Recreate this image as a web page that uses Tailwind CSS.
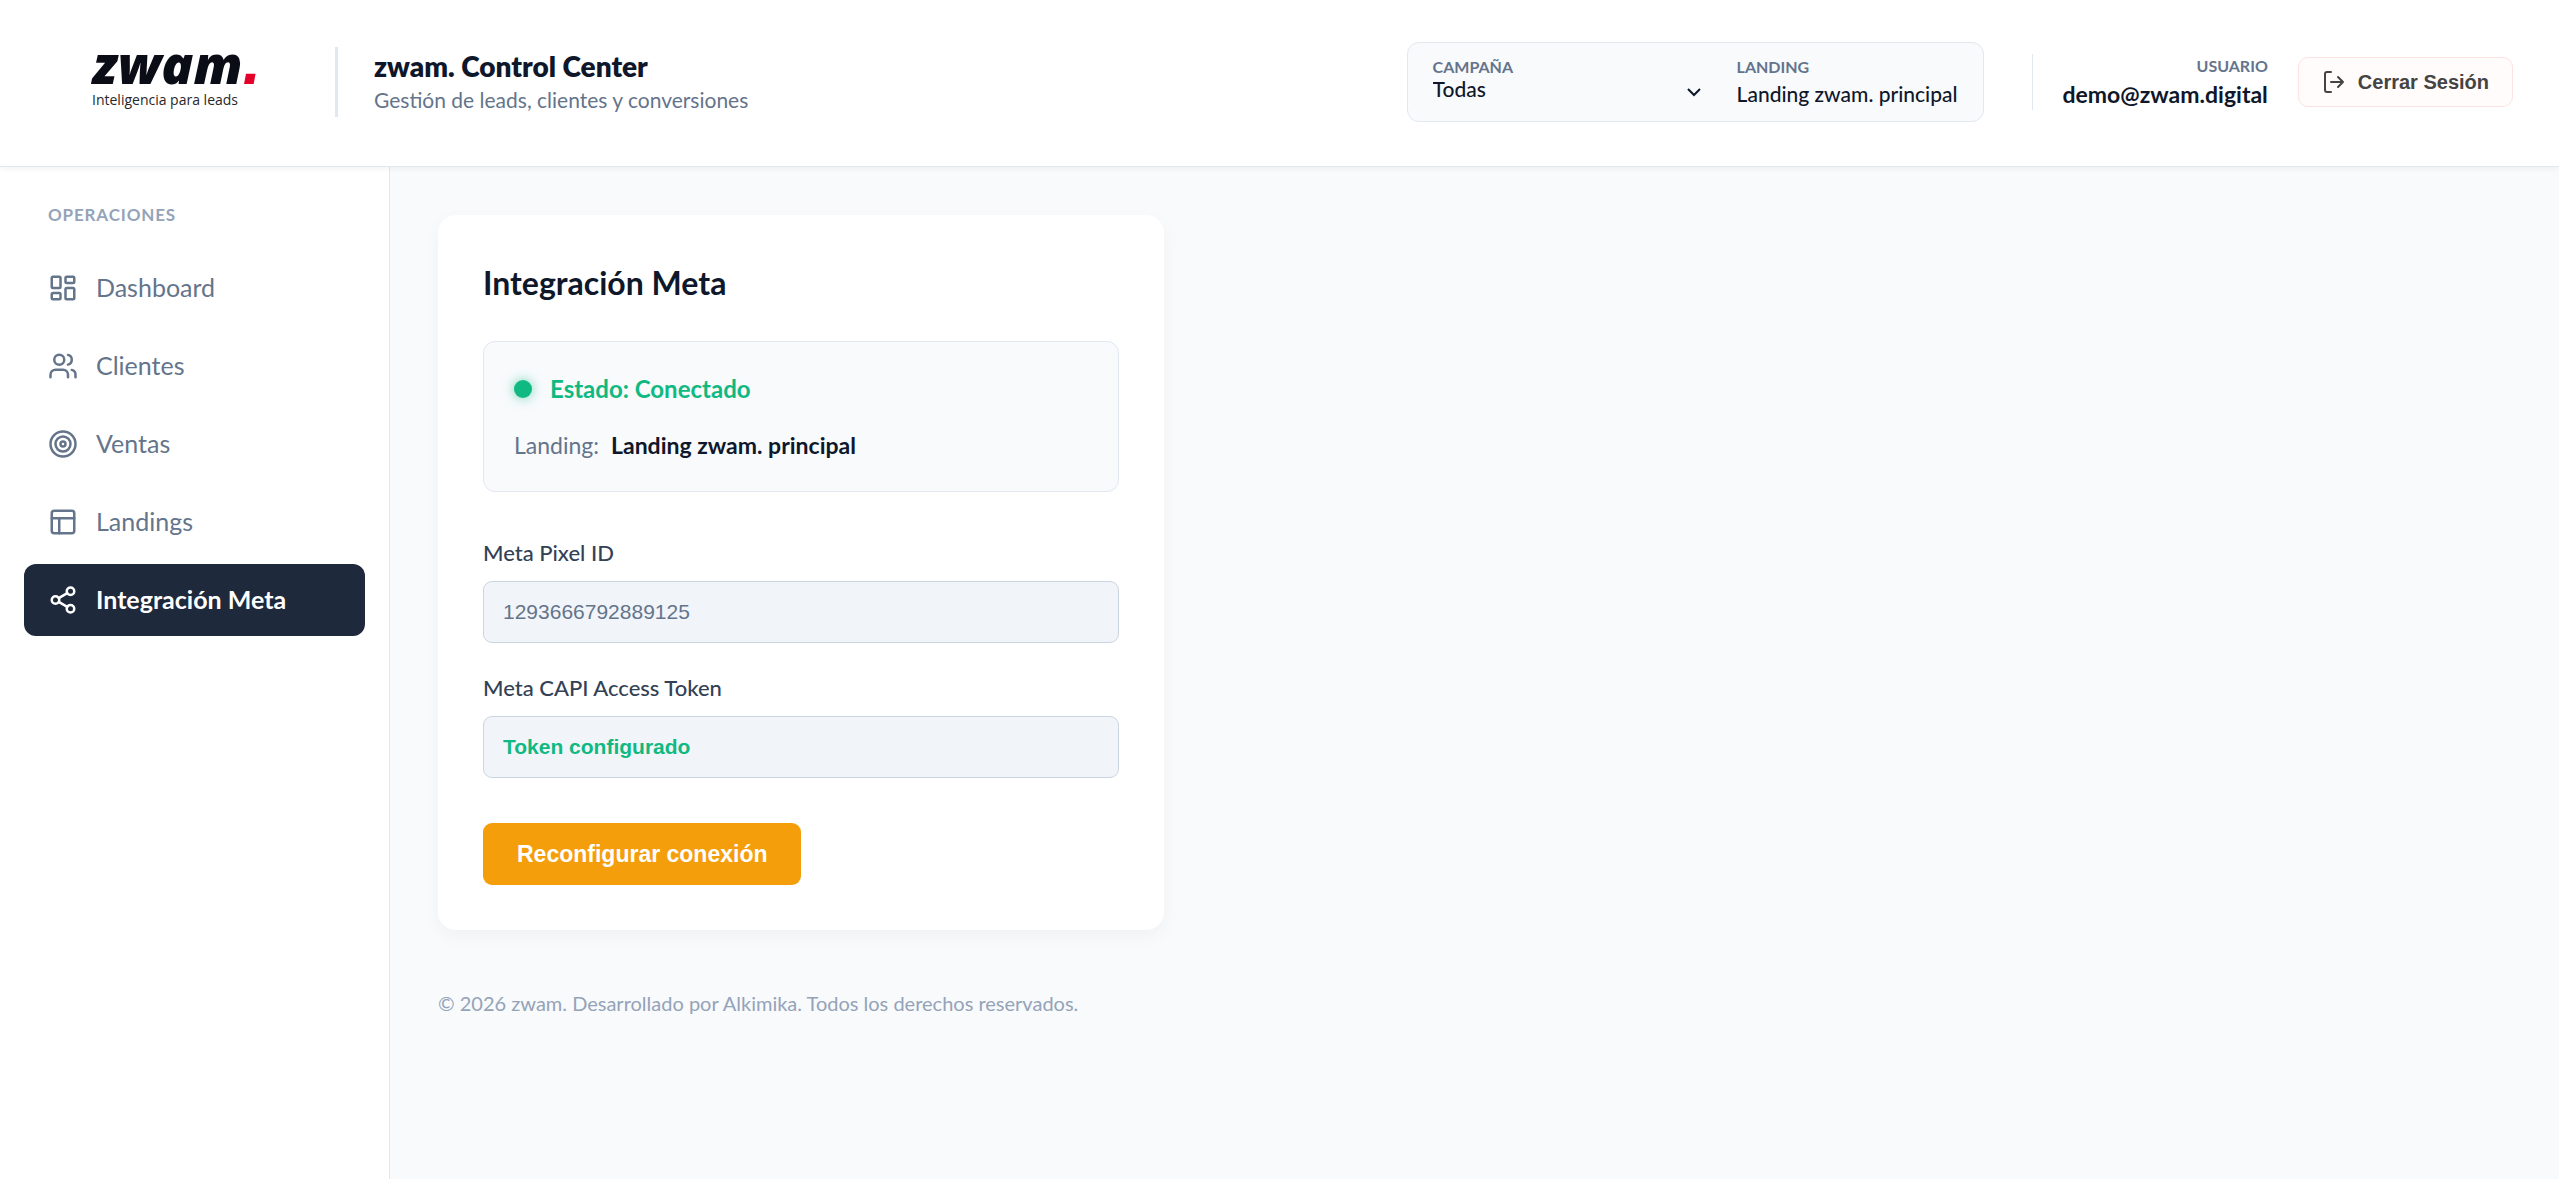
<!DOCTYPE html>
<html lang="es">
<head>
    <meta charset="UTF-8">
    <meta name="viewport" content="width=device-width, initial-scale=1.0">
    <title>zwam. Control Center</title>
    <script src="https://cdn.jsdelivr.net/npm/@tailwindcss/browser@4"></script>
</head>
<body class="min-h-screen flex flex-col bg-[#f8fafc] text-[#0f172a] font-['Lato',sans-serif]">
    <!-- Header -->
    <header class="relative flex items-center justify-between bg-white border-b border-[#e2e8f0] shadow-[0_2px_6px_rgba(0,0,0,0.05)] pl-12 pr-[46px] pt-[42px] pb-11">
        <div class="flex items-center">
            <!-- Logo -->
            <a href="#" class="w-[287px] pl-11 whitespace-nowrap">
                <span class="flex items-baseline h-9 leading-4 text-[#0a0c16]">
                    <span class="font-['Open_Sans',sans-serif] font-extrabold italic text-[53px]">zwam</span>
                    <span class="font-['Liberation_Sans',sans-serif] font-bold italic text-[68px] text-[#e4002b]">.</span>
                </span>
                <span class="block font-['Open_Sans',sans-serif] text-sm leading-6 text-[#27272a]">Inteligencia para leads</span>
            </a>
            <div class="h-[70px] flex flex-col justify-center border-l-3 border-[#e2e8f0] pl-9">
                <h1 class="text-[28px] leading-9 font-extrabold">zwam. Control Center</h1>
                <p class="text-[21px] leading-8 text-[#64748b]">Gestión de leads, clientes y conversiones</p>
            </div>
        </div>

        <div class="flex items-center">
            <!-- Context selector -->
            <div class="flex items-start gap-9 bg-[#f8fafc] border border-[#e2e8f0] rounded-xl px-[25px] pt-[14px] pb-[10px] mr-12">
                <div class="relative w-[268px]">
                    <label for="campana" class="block text-base leading-5 font-bold text-[#64748b]">CAMPAÑA</label>
                    <select id="campana" class="block w-full h-7 appearance-none bg-transparent text-[21px] leading-6 pb-1 font-medium">
                        <option>Todas</option>
                    </select>
                    <svg class="absolute right-0 bottom-1 w-[14px] h-[14px] pointer-events-none" viewBox="0 0 14 14" fill="none" stroke="currentColor" stroke-width="2">
                        <path d="M1 2l6 6 6-6"/>
                    </svg>
                </div>
                <div>
                    <div class="text-base leading-5 font-bold text-[#64748b]">LANDING</div>
                    <div class="text-[21px] leading-[34px] font-medium">Landing zwam. principal</div>
                </div>
            </div>

            <!-- User -->
            <div class="border-l border-[#e2e8f0] pl-[30px] mr-[30px] text-right">
                <div class="text-base leading-6 font-bold text-[#64748b]">USUARIO</div>
                <div class="text-[23px] leading-8 font-bold">demo@zwam.digital</div>
            </div>
            <button type="button" class="flex items-center gap-3 h-[50px] px-[23px] rounded-[10px] border border-[#fee2e2] bg-[#fffcfb] font-['Liberation_Sans',sans-serif] text-xl font-semibold text-[#444]">
                <svg class="w-6 h-6" viewBox="0 0 24 24" fill="none" stroke="currentColor" stroke-width="2" stroke-linecap="round" stroke-linejoin="round">
                    <path d="M9 2H5a2 2 0 0 0-2 2v16a2 2 0 0 0 2 2h4M9 12h12M16 7l5 5-5 5"/>
                </svg>
                Cerrar Sesión
            </button>
        </div>
    </header>

    <div class="flex flex-1">
        <!-- Sidebar -->
        <aside class="w-[390px] shrink-0 bg-white border-r border-[#e2e8f0] px-6 pt-9">
            <div class="px-6 mb-[25px] text-[17px] leading-6 font-bold tracking-wider text-[#94a3b8]">OPERACIONES</div>
            <nav class="flex flex-col gap-[6px] text-[25px] text-[#64748b]">
                <a href="#" class="flex items-center gap-[18px] h-[72px] px-6 rounded-xl">
                    <svg class="w-[30px] h-[30px]" viewBox="0 0 24 24" fill="none" stroke="currentColor" stroke-width="2" stroke-linecap="round" stroke-linejoin="round">
                        <rect width="7" height="9" x="3" y="3" rx="1"/>
                        <rect width="7" height="5" x="14" y="3" rx="1"/>
                        <rect width="7" height="9" x="14" y="12" rx="1"/>
                        <rect width="7" height="5" x="3" y="16" rx="1"/>
                    </svg>
                    Dashboard
                </a>
                <a href="#" class="flex items-center gap-[18px] h-[72px] px-6 rounded-xl">
                    <svg class="w-[30px] h-[30px]" viewBox="0 0 24 24" fill="none" stroke="currentColor" stroke-width="2" stroke-linecap="round" stroke-linejoin="round">
                        <path d="M16 21v-2a4 4 0 0 0-4-4H6a4 4 0 0 0-4 4v2"/>
                        <circle cx="9" cy="7" r="4"/>
                        <path d="M22 21v-2a4 4 0 0 0-3-3.87"/>
                        <path d="M16 3.13a4 4 0 0 1 0 7.75"/>
                    </svg>
                    Clientes
                </a>
                <a href="#" class="flex items-center gap-[18px] h-[72px] px-6 rounded-xl">
                    <svg class="w-[30px] h-[30px]" viewBox="0 0 24 24" fill="none" stroke="currentColor" stroke-width="2">
                        <circle cx="12" cy="12" r="10"/>
                        <circle cx="12" cy="12" r="6"/>
                        <circle cx="12" cy="12" r="2"/>
                    </svg>
                    Ventas
                </a>
                <a href="#" class="flex items-center gap-[18px] h-[72px] px-6 rounded-xl">
                    <svg class="w-[30px] h-[30px]" viewBox="0 0 24 24" fill="none" stroke="currentColor" stroke-width="2" stroke-linecap="round" stroke-linejoin="round">
                        <rect width="18" height="18" x="3" y="3" rx="2"/>
                        <path d="M3 9h18M9 21V9"/>
                    </svg>
                    Landings
                </a>
                <a href="#" class="flex items-center gap-[18px] h-[72px] px-6 rounded-xl bg-[#1e293b] text-white font-bold">
                    <svg class="w-[30px] h-[30px]" viewBox="0 0 24 24" fill="none" stroke="currentColor" stroke-width="2" stroke-linecap="round" stroke-linejoin="round">
                        <circle cx="18" cy="5" r="3"/>
                        <circle cx="6" cy="12" r="3"/>
                        <circle cx="18" cy="19" r="3"/>
                        <path d="M8.59 13.51l6.83 3.98M15.41 6.51l-6.82 3.98"/>
                    </svg>
                    Integración Meta
                </a>
            </nav>
        </aside>

        <!-- Main content -->
        <main class="flex-1 p-12">
            <section class="w-full max-w-[726px] bg-white rounded-[18px] p-[45px] shadow-[0_6px_18px_rgba(0,0,0,0.04)]">
                <h2 class="text-[32px] leading-[45px] font-bold">Integración Meta</h2>

                <!-- Connection status -->
                <div class="mt-9 bg-[#f8fafc] border border-[#e2e8f0] rounded-xl p-[30px]">
                    <div class="flex items-center gap-[18px] text-2xl leading-[33px] font-bold text-[#10b981]">
                        <span class="w-[18px] h-[18px] rounded-full bg-[#10b981] shadow-[0_0_12px_rgba(16,185,129,0.6)]"></span>
                        Estado: Conectado
                    </div>
                    <div class="mt-6 flex gap-3 text-[23px] leading-8">
                        <span class="text-[#64748b]">Landing:</span>
                        <span class="font-bold">Landing zwam. principal</span>
                    </div>
                </div>

                <form>
                    <div class="mt-[45px] flex flex-col gap-3">
                        <label for="pixel" class="text-[22px] leading-8 font-medium text-[#334155]">Meta Pixel ID</label>
                        <input id="pixel" type="text" value="1293666792889125" readonly class="w-full h-[62px] px-[19px] rounded-[9px] border border-[#cbd5e1] bg-[#f1f5f9] font-['Liberation_Sans',sans-serif] text-[21px] text-[#64748b]">
                    </div>
                    <div class="mt-[29px] flex flex-col gap-3">
                        <label for="token" class="text-[22px] leading-8 font-medium text-[#334155]">Meta CAPI Access Token</label>
                        <input id="token" type="text" value="Token configurado" readonly class="w-full h-[62px] px-[19px] rounded-[9px] border border-[#cbd5e1] bg-[#f1f5f9] font-['Liberation_Sans',sans-serif] text-[21px] font-semibold text-[#10b981]">
                    </div>
                    <button type="button" class="mt-[45px] h-[62px] px-[34px] rounded-[9px] bg-[#f59e0b] font-['Liberation_Sans',sans-serif] text-[23px] font-semibold text-white">Reconfigurar conexión</button>
                </form>
            </section>

            <footer class="mt-[58px] text-xl leading-[30px] text-[#94a3b8]">© 2026 zwam. Desarrollado por Alkimika. Todos los derechos reservados.</footer>
        </main>
    </div>
</body>
</html>
